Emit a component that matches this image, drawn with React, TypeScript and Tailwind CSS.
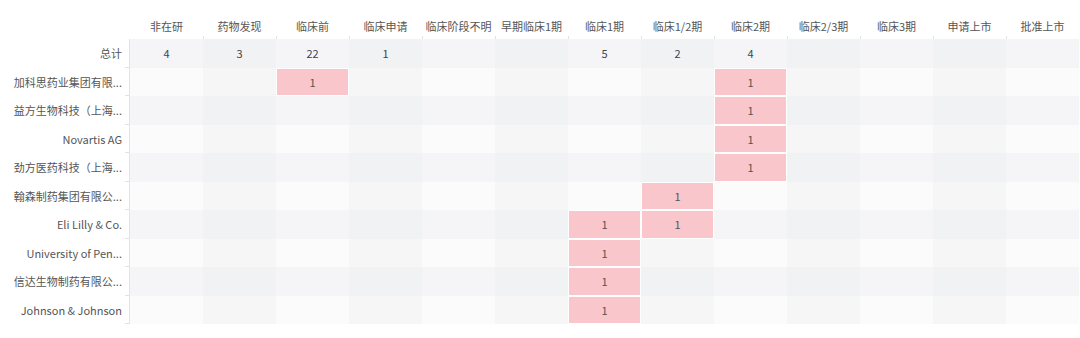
const stages = [
  "非在研",
  "药物发现",
  "临床前",
  "临床申请",
  "临床阶段不明",
  "早期临床1期",
  "临床1期",
  "临床1/2期",
  "临床2期",
  "临床2/3期",
  "临床3期",
  "申请上市",
  "批准上市",
];

type Row = { name: string; values: Record<number, number>; total?: boolean };

const rows: Row[] = [
  { name: "总计", total: true, values: { 0: 4, 1: 3, 2: 22, 3: 1, 6: 5, 7: 2, 8: 4 } },
  { name: "加科思药业集团有限...", values: { 2: 1, 8: 1 } },
  { name: "益方生物科技（上海...", values: { 8: 1 } },
  { name: "Novartis AG", values: { 8: 1 } },
  { name: "劲方医药科技（上海...", values: { 8: 1 } },
  { name: "翰森制药集团有限公...", values: { 7: 1 } },
  { name: "Eli Lilly & Co.", values: { 6: 1, 7: 1 } },
  { name: "University of Pen...", values: { 6: 1 } },
  { name: "信达生物制药有限公...", values: { 6: 1 } },
  { name: "Johnson & Johnson", values: { 6: 1 } },
];

// split-area shading, checkerboard of row band x column band
const shades = [
  ["bg-[#f5f5f7]", "bg-[#f1f2f4]"],
  ["bg-[#fbfbfb]", "bg-[#f6f6f7]"],
];

export default function App() {
  return (
    <div className="w-[1080px] h-[338px] bg-white pt-[17px] text-[11px] text-[#555] antialiased font-['Microsoft_YaHei','Noto_Sans_CJK_SC',sans-serif]">
      {/* x axis labels */}
      <div className="flex h-[22px]">
        <div className="w-[130px] shrink-0" />
        <div className="grid grid-cols-[repeat(13,73px)]">
          {stages.map((s, i) => (
            <div key={s} className="relative text-center leading-[19px] whitespace-nowrap text-[#555]">
              {s}
              {i > 0 && <span className="absolute left-0 bottom-0 h-[3px] w-px bg-[#e3e3e3]" />}
            </div>
          ))}
        </div>
      </div>

      <div className="flex">
        {/* y axis labels */}
        <div className="w-[130px] shrink-0 border-r border-[#e3e3e3] grid grid-rows-[repeat(10,28.5px)]">
          {rows.map((r) => (
            <div key={r.name} className="relative flex items-center justify-end pr-[7px] whitespace-nowrap">
              {r.name}
              <span className="absolute right-0 bottom-0 w-[4px] h-px bg-[#e3e3e3]" />
            </div>
          ))}
        </div>

        {/* heatmap cells */}
        <div className="grid grid-cols-[repeat(13,73px)] grid-rows-[repeat(10,28.5px)]">
          {rows.map((r, ri) =>
            stages.map((s, ci) => {
              const v = r.values[ci];
              const hot = v !== undefined && !r.total;
              return (
                <div key={r.name + s} className={shades[ri % 2][ci % 2]}>
                  {hot ? (
                    <div className="h-full w-full border border-white bg-[#f8c6cb] flex items-center justify-center text-[#555]">
                      {v}
                    </div>
                  ) : (
                    <div className="h-full w-full flex items-center justify-center text-[#444]">
                      {v}
                    </div>
                  )}
                </div>
              );
            })
          )}
        </div>
      </div>
    </div>
  );
}
